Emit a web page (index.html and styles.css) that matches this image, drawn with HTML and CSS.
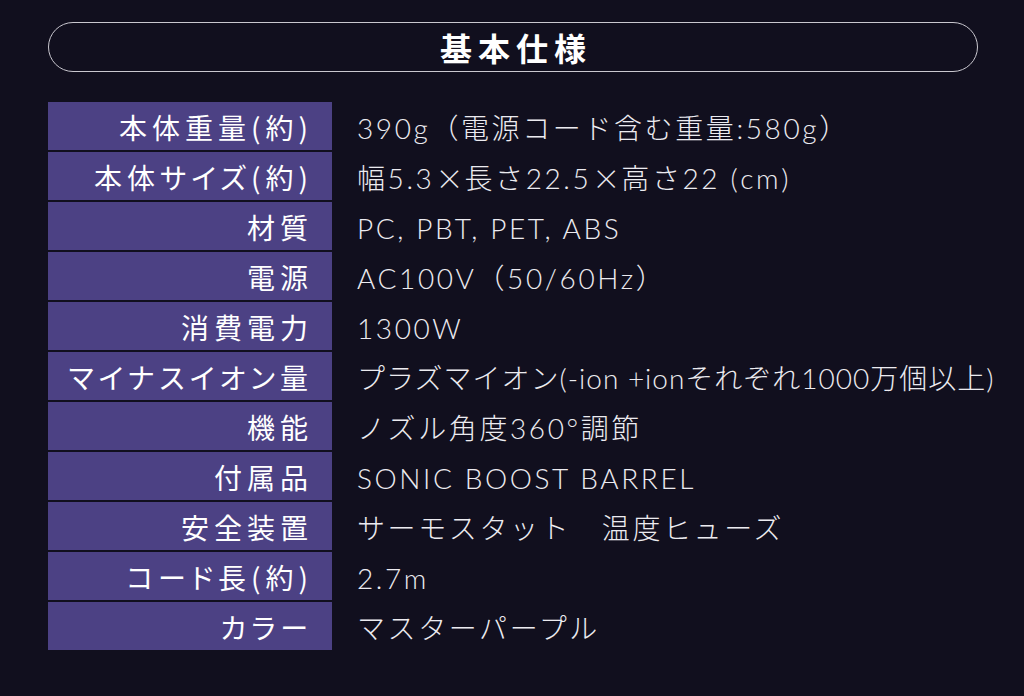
FILE: index.html
```html
<!DOCTYPE html>
<html lang="ja">
<head>
<meta charset="utf-8">
<link rel="stylesheet" href="styles.css">
</head>
<body>
<div class="page">
  <h1 class="title">基本仕様</h1>
  <div class="spec">
    <div class="row"><div class="label">本体重量(約)</div><div class="value">390g（電源コード含む重量:580g）</div></div>
    <div class="row"><div class="label">本体サイズ(約)</div><div class="value">幅5.3<span class="cjk">×</span>長さ22.5<span class="cjk">×</span>高さ22 (cm)</div></div>
    <div class="row"><div class="label">材質</div><div class="value">PC, PBT, PET, ABS</div></div>
    <div class="row"><div class="label">電源</div><div class="value">AC100V（50/60Hz）</div></div>
    <div class="row"><div class="label">消費電力</div><div class="value">1300W</div></div>
    <div class="row"><div class="label">マイナスイオン量</div><div class="value compact">プラズマイオン(-ion +ionそれぞれ1000万個以上)</div></div>
    <div class="row"><div class="label">機能</div><div class="value">ノズル角度360°調節</div></div>
    <div class="row"><div class="label">付属品</div><div class="value">SONIC BOOST BARREL</div></div>
    <div class="row"><div class="label">安全装置</div><div class="value">サーモスタット　温度ヒューズ</div></div>
    <div class="row"><div class="label">コード長(約)</div><div class="value">2.7m</div></div>
    <div class="row"><div class="label">カラー</div><div class="value">マスターパープル</div></div>
  </div>
</div>
</body>
</html>
```
FILE: styles.css
```css
* { box-sizing: border-box; }
html, body {
  margin: 0;
  padding: 0;
  background: #110f1e;
}
body {
  width: 1024px;
  height: 696px;
  overflow: hidden;
  font-family: "Noto Sans CJK JP", "Noto Sans", sans-serif;
  color: #ffffff;
}
.page {
  padding: 22px 46px 0 48px;
}
.title {
  margin: 0;
  height: 50px;
  border: 1.5px solid #c9c7cf;
  border-radius: 25px;
  display: flex;
  align-items: center;
  justify-content: center;
  font-size: 32px;
  font-weight: 700;
  letter-spacing: 6px;
  padding-left: 6px;
  color: #ffffff;
  line-height: 1;
}
.spec {
  margin-top: 30px;
  display: flex;
  flex-direction: column;
  gap: 2px;
}
.row {
  display: flex;
  height: 48px;
  align-items: stretch;
}
.label {
  flex: none;
  width: 284px;
  background: #4c4184;
  display: flex;
  align-items: center;
  justify-content: flex-end;
  padding-right: 19px;
  font-family: "Noto Sans CJK JP", sans-serif;
  font-feature-settings: "palt";
  font-size: 28px;
  font-weight: 400;
  letter-spacing: 5px;
  color: #ffffff;
  line-height: 1;
  white-space: nowrap;
  padding-top: 2px;
}
.value {
  flex: 1 1 auto;
  padding-left: 25px;
  display: flex;
  align-items: center;
  font-family: "Lato", "Noto Sans CJK JP", sans-serif;
  font-size: 28px;
  font-weight: 300;
  letter-spacing: 2.6px;
  color: #ecebf0;
  line-height: 1;
  white-space: nowrap;
  padding-top: 4px;
}
.value.compact {
  letter-spacing: 1px;
}
.cjk {
  font-family: "Noto Sans CJK JP", sans-serif;
  font-weight: 300;
  letter-spacing: 0;
  margin: 0 1px;
}
```
